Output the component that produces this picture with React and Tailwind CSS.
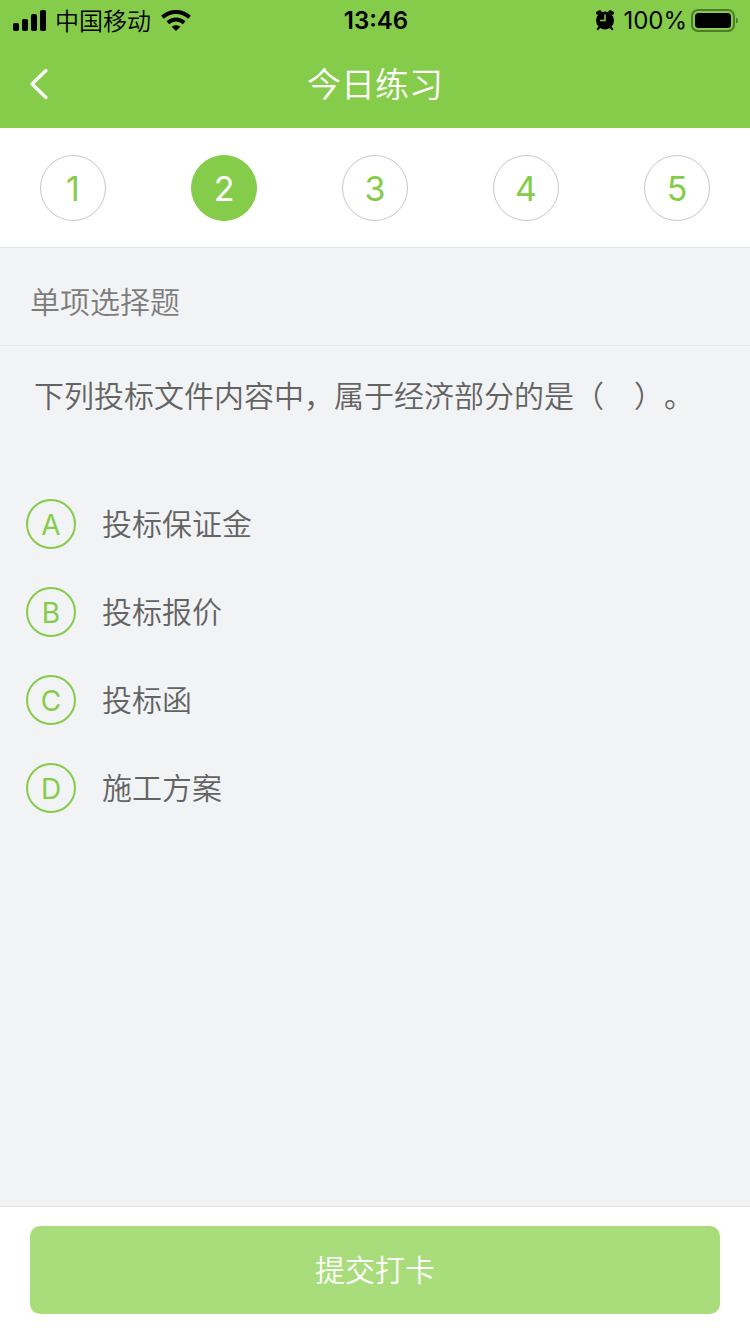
import React, { useState } from 'react';

const STEPS = [1, 2, 3, 4, 5];

const QUESTION = {
  type: '单项选择题',
  title: '下列投标文件内容中，属于经济部分的是（　）。',
  options: [
    { key: 'A', text: '投标保证金' },
    { key: 'B', text: '投标报价' },
    { key: 'C', text: '投标函' },
    { key: 'D', text: '施工方案' },
  ],
};

const SignalIcon = () => (
  <svg width="34" height="22" viewBox="0 0 34 22" aria-hidden="true">
    <rect x="0" y="13" width="6" height="8" rx="1.8" />
    <rect x="9" y="9" width="6" height="12" rx="1.8" />
    <rect x="18" y="4" width="6" height="17" rx="1.8" />
    <rect x="27" y="0" width="6" height="21" rx="1.8" />
  </svg>
);

const WifiIcon = () => (
  <svg width="30" height="22" viewBox="0 0 30 22" fill="none" stroke="#000" strokeWidth="4" aria-hidden="true">
    <path d="M1.5 7.2C9 0.2 21 0.2 28.5 7.2" />
    <path d="M6.8 12.8C11.4 8.4 18.6 8.4 23.2 12.8" />
    <path d="M15 21L10.6 16.8C13 14.6 17 14.6 19.4 16.8Z" fill="#000" stroke="none" />
  </svg>
);

const AlarmIcon = () => (
  <svg width="20" height="22" viewBox="0 0 20 22" fill="none" stroke="#000" strokeLinecap="round" aria-hidden="true">
    <circle cx="10" cy="10.5" r="9" fill="#000" stroke="none" />
    <path d="M2.6 3L5 1.8M17.4 3L15 1.8" strokeWidth="3.2" />
    <path d="M4 17.6L2.8 19M16 17.6L17.2 19" strokeWidth="2.2" />
    <path d="M10 5V10.5H5.5" stroke="#86cc4b" strokeWidth="1.5" />
  </svg>
);

const BatteryIcon = () => (
  <svg width="48" height="24" viewBox="0 0 48 24" aria-hidden="true">
    <rect x="1" y="1" width="42" height="21" rx="6" fill="none" stroke="#000" strokeOpacity="0.4" strokeWidth="2" />
    <rect x="4" y="4" width="36" height="15" rx="3.5" />
    <path d="M45 8.5C47.6 9.5 47.6 13.5 45 14.5Z" fillOpacity="0.4" />
  </svg>
);

const StatusBar = () => (
  <div className="grid h-10 grid-cols-3 items-center pr-[11px] pl-[13px] text-2xl leading-10 text-black">
    <div className="flex items-center gap-2">
      <SignalIcon />
      <span className="pt-0.5 pr-0.5 font-[350]">中国移动</span>
      <WifiIcon />
    </div>
    <div className="text-center font-semibold">13:46</div>
    <div className="flex items-center justify-end gap-1">
      <AlarmIcon />
      <span className="pl-1">100%</span>
      <BatteryIcon />
    </div>
  </div>
);

const NavBar = ({ title }) => (
  <div className="grid h-22 grid-cols-[80px_1fr_80px] items-center">
    <button type="button" aria-label="返回" className="flex h-full items-center pl-7">
      <svg width="22" height="32" viewBox="0 0 22 32" fill="none" stroke="#fff" strokeWidth="3.2" strokeLinecap="round" strokeLinejoin="round">
        <path d="M18 2.5L4 16L18 29.5" />
      </svg>
    </button>
    <h1 className="text-center text-[34px] font-[350] text-white">{title}</h1>
  </div>
);

const StepNav = ({ current, onChange }) => (
  <nav className="flex justify-between border-b border-[#e6e6e8] bg-white px-10 pt-[27px] pb-[26px]">
    {STEPS.map((step) => (
      <button
        key={step}
        type="button"
        aria-current={step === current ? 'step' : undefined}
        onClick={() => onChange(step)}
        className={
          step === current
            ? 'size-[66px] rounded-full border border-[#86cc4b] bg-[#86cc4b] text-[34px] text-white'
            : 'size-[66px] rounded-full border border-[#c8c8c8] text-[34px] text-[#86cc4b]'
        }
      >
        {step}
      </button>
    ))}
  </nav>
);

const OptionItem = ({ option, checked, onSelect }) => (
  <label className="flex h-22 cursor-pointer items-center gap-[26px]">
    <input
      type="radio"
      name="answer"
      value={option.key}
      checked={checked}
      onChange={() => onSelect(option.key)}
      className="peer sr-only"
    />
    <span className="flex size-[50px] items-center justify-center rounded-full border-2 border-[#86cc4b] pt-0.5 text-[28px] text-[#86cc4b] peer-checked:bg-[#86cc4b] peer-checked:text-white">
      {option.key}
    </span>
    <span className="text-[30px] font-[350] text-[#636363]">{option.text}</span>
  </label>
);

const App = () => {
  const [current, setCurrent] = useState(2);
  const [answer, setAnswer] = useState('');

  return (
    <div className="flex min-h-screen flex-col bg-[#f2f3f5] font-['Inter','Noto_Sans_CJK_SC',sans-serif]">
      <header className="bg-[#86cc4b]">
        <StatusBar />
        <NavBar title="今日练习" />
      </header>

      <StepNav current={current} onChange={setCurrent} />

      <main className="flex-1">
        <h2 className="border-b border-[#e9eaec] px-[30px] pt-8 pb-5 text-[30px] leading-[45px] font-[350] text-[#7c7c7c]">
          {QUESTION.type}
        </h2>
        <p className="px-[34px] pt-7 text-[30px] leading-[45px] font-[350] text-[#636363] [text-spacing-trim:space-all]">
          {QUESTION.title}
        </p>
        <div role="radiogroup" aria-label={QUESTION.title} className="px-[26px] pt-[61px]">
          {QUESTION.options.map((option) => (
            <OptionItem
              key={option.key}
              option={option}
              checked={answer === option.key}
              onSelect={setAnswer}
            />
          ))}
        </div>
      </main>

      <footer className="border-t border-[#e6e6e8] bg-white px-[30px] pt-[19px] pb-5">
        <button type="button" className="h-22 w-full rounded-[10px] bg-[#a9dc7a] text-[30px] font-[350] text-white">
          提交打卡
        </button>
      </footer>
    </div>
  );
};

export default App;
